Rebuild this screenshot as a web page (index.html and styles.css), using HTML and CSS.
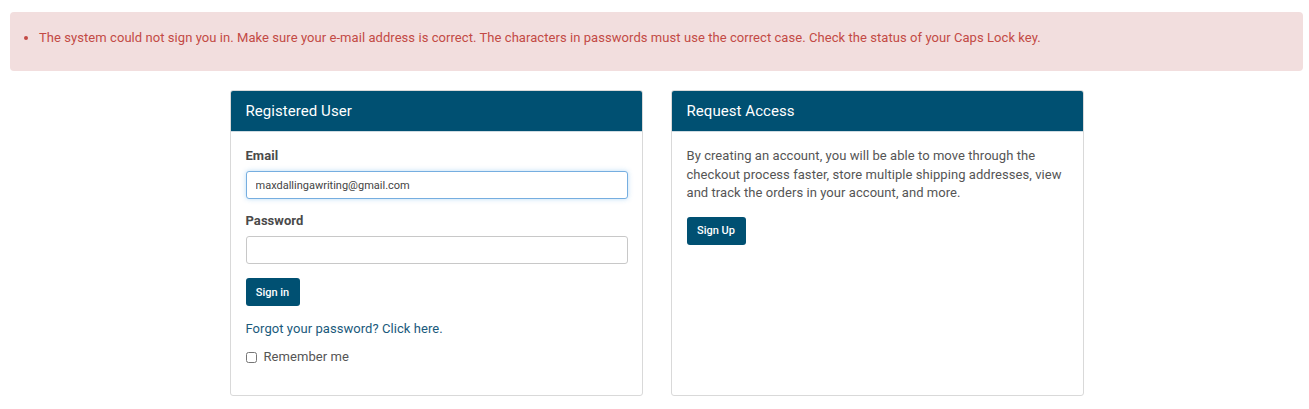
FILE: index.html
```html
<!DOCTYPE html>
<html>
<head>
<meta charset="utf-8">
<link rel="stylesheet" href="styles.css">
</head>
<body>
<div class="alert">
  <ul>
    <li>The system could not sign you in. Make sure your e-mail address is correct. The characters in passwords must use the correct case. Check the status of your Caps Lock key.</li>
  </ul>
</div>
<div class="cards">
  <div class="card">
    <div class="card-head">Registered User</div>
    <div class="card-body">
      <label class="lbl">Email</label>
      <input class="inp focus" type="text" value="maxdallingawriting@gmail.com">
      <label class="lbl lbl2">Password</label>
      <input class="inp" type="password">
      <button class="btn btn-signin">Sign in</button>
      <a class="forgot" href="#">Forgot your password? Click here.</a>
      <label class="remember"><input type="checkbox" class="chk"> Remember me</label>
    </div>
  </div>
  <div class="card">
    <div class="card-head">Request Access</div>
    <div class="card-body">
      <p class="desc">By creating an account, you will be able to move through the checkout process faster, store multiple shipping addresses, view and track the orders in your account, and more.</p>
      <button class="btn btn-signup">Sign Up</button>
    </div>
  </div>
</div>
</body>
</html>
```
FILE: styles.css
```css
* { box-sizing: border-box; }
body {
  margin: 0;
  padding: 12px 6px 0 10px;
  font-family: Roboto, "Liberation Sans", sans-serif;
  font-size: 13px;
  letter-spacing: 0.06px;
  color: #555;
  background: #fff;
}
.alert {
  background: #f2dede;
  border-radius: 4px;
  height: 59px;
  padding: 18px 0 0 0;
  color: #c34a45;
}
.alert ul {
  margin: 0;
  padding-left: 29px;
}
.alert li {
  line-height: 16px;
  font-size: 13px;
}
.cards {
  display: flex;
  justify-content: center;
  gap: 28px;
  margin-top: 19px;
}
.card {
  width: 413px;
  height: 306px;
  border: 1px solid #d9d9d9;
  border-radius: 3px;
  overflow: hidden;
}
.card-head {
  background: #005072;
  color: #fff;
  font-size: 15px;
  height: 41px;
  line-height: 40px;
  padding-left: 15px;
  border-bottom: 1px solid #cfdbe2;
}
.card-body {
  padding: 16px 14px 0 15px;
  display: flex;
  flex-direction: column;
  align-items: flex-start;
}
.lbl {
  font-weight: bold;
  color: #4a4a4a;
  font-size: 13px;
  line-height: 16px;
  margin-bottom: 7px;
}
.lbl2 { margin-top: 14px; }
.inp {
  width: 382px;
  height: 28px;
  border: 1px solid #c8c8c8;
  border-radius: 3px;
  padding: 0 9px;
  font-family: Roboto, "Liberation Sans", sans-serif;
  font-size: 11px;
  color: #444;
  outline: none;
}
.inp.focus {
  border-color: #76aee0;
  box-shadow: 0 0 5px rgba(102, 175, 233, 0.45);
}
.btn {
  background: #005072;
  color: #fff;
  border: none;
  border-radius: 3px;
  height: 28px;
  font-family: Roboto, "Liberation Sans", sans-serif;
  font-size: 11px;
  font-weight: 500;
  padding: 0;
}
.btn-signin { margin-top: 14px; width: 54px; }
.btn-signup { width: 59px; }
.forgot {
  margin-top: 15px;
  color: #1a5a7c;
  text-decoration: none;
  font-size: 13px;
  line-height: 16px;
}
.remember {
  margin-top: 12px;
  display: flex;
  align-items: center;
  font-size: 13px;
  line-height: 16px;
  color: #555;
}
.chk {
  margin: 0 7px 0 0;
  width: 11px;
  height: 11px;
}
.desc {
  margin: -1px 0 14px 0;
  line-height: 18.5px;
  font-size: 13px;
  color: #555;
  width: 382px;
}
```
